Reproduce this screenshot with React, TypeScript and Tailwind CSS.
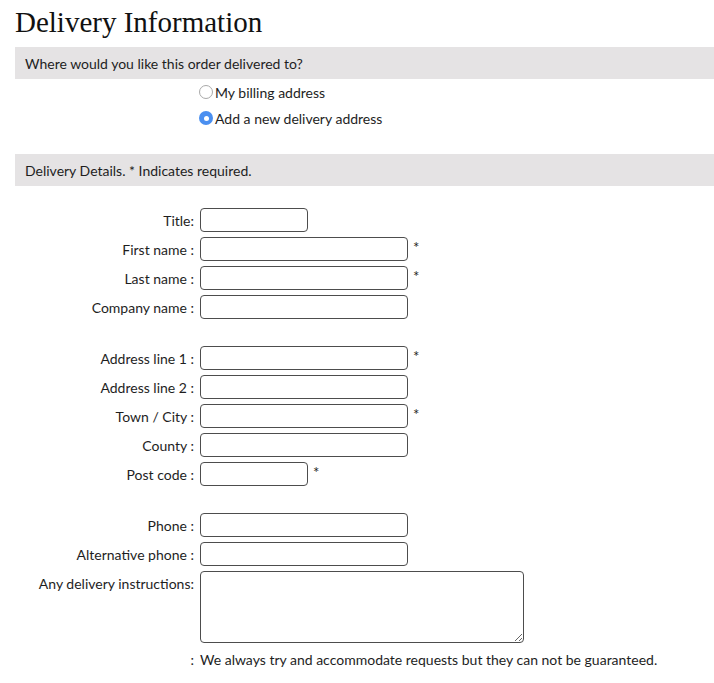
import React, { useState } from 'react';

const Required = () => <span className="ml-[5px] -mt-[3px] text-[15px] leading-none">*</span>;

interface FieldProps {
  label: string;
  width?: 'short' | 'long';
  required?: boolean;
  className?: string;
}

const Field: React.FC<FieldProps> = ({ label, width = 'long', required, className = '' }) => (
  <div className={`flex items-center ${className}`}>
    <label className="w-[194px] shrink-0 text-right">{label}</label>
    <input
      type="text"
      className={`ml-[6px] h-[24px] rounded-[4px] border border-[#4d4d4d] bg-white px-1 outline-none ${width === 'short' ? 'w-[108px]' : 'w-[208px]'}`}
    />
    {required && <Required />}
  </div>
);

const Radio: React.FC<{ checked: boolean; label: string; onClick: () => void }> = ({ checked, label, onClick }) => (
  <button type="button" onClick={onClick} className="flex h-[26px] items-center gap-[2px]">
    {checked ? (
      <span className="flex h-[14px] w-[14px] items-center justify-center rounded-full bg-[#4a8ff0]">
        <span className="h-[5px] w-[5px] rounded-full bg-white" />
      </span>
    ) : (
      <span className="h-[14px] w-[14px] rounded-full border border-[#a9a9a9] bg-white" />
    )}
    <span>{label}</span>
  </button>
);

export default function App() {
  const [dest, setDest] = useState<'billing' | 'new'>('new');

  return (
    <div className="min-h-[683px] bg-white pl-[15px] font-['Lato',sans-serif] text-[14px] text-[#1e1e1e]">
      <h1 className="h-[47px] font-['Liberation_Serif',serif] text-[29px] leading-[45px] text-[#111]">Delivery Information</h1>

      <div className="flex h-[32px] items-center bg-[#e5e3e4] pl-[10px]">Where would you like this order delivered to?</div>

      <div className="flex flex-col pl-[184px]">
        <Radio checked={dest === 'billing'} label="My billing address" onClick={() => setDest('billing')} />
        <Radio checked={dest === 'new'} label="Add a new delivery address" onClick={() => setDest('new')} />
      </div>

      <div className="mt-[23px] flex h-[32px] items-center bg-[#e5e3e4] pl-[10px]">Delivery Details. * Indicates required.</div>

      <div className="-ml-[15px] mt-[22px] flex flex-col gap-[5px]">
        <Field label="Title:" width="short" />
        <Field label="First name :" required />
        <Field label="Last name :" required />
        <Field label="Company name :" />

        <Field label="Address line 1 :" required className="mt-[22px]" />
        <Field label="Address line 2 :" />
        <Field label="Town / City :" required />
        <Field label="County :" />
        <Field label="Post code :" width="short" required />

        <Field label="Phone :" className="mt-[22px]" />
        <Field label="Alternative phone :" />

        <div className="flex items-start">
          <label className="flex h-[24px] w-[194px] shrink-0 items-center justify-end">Any delivery instructions:</label>
          <textarea className="ml-[6px] h-[72px] w-[324px] rounded-[4px] border border-[#4d4d4d] bg-white px-1 outline-none" />
        </div>

        <div className="mt-[3px] flex leading-[18px]">
          <span className="w-[194px] shrink-0 text-right">:</span>
          <span className="ml-[6px]">We always try and accommodate requests but they can not be guaranteed.</span>
        </div>
      </div>
    </div>
  );
}
